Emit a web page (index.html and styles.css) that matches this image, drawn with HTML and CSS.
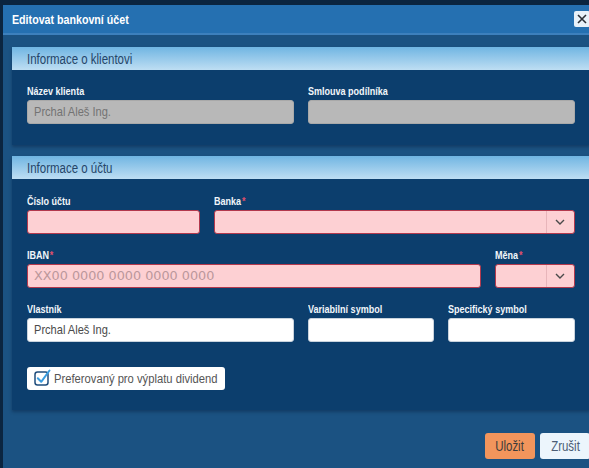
FILE: index.html
```html
<!DOCTYPE html>
<html lang="cs">
<head>
<meta charset="utf-8">
<link rel="stylesheet" href="styles.css">
</head>
<body>
<div class="modal">
  <div class="modal-header">
    <span class="modal-title"><span class="n">Editovat bankovní účet</span></span>
    <button class="close-btn" type="button" aria-label="Zavřít">
      <svg width="10" height="10" viewBox="0 0 10 10"><path d="M1 1 L9 9 M9 1 L1 9" stroke="#2b2f36" stroke-width="1.6" fill="none"/></svg>
    </button>
  </div>
  <div class="modal-body">
    <section class="panel">
      <div class="panel-head"><span class="n">Informace o klientovi</span></div>
      <div class="panel-body grid">
        <div class="field span6">
          <label class="lbl"><span class="n">Název klienta</span></label>
          <div class="input disabled"><span class="n">Prchal Aleš Ing.</span></div>
        </div>
        <div class="field span6">
          <label class="lbl"><span class="n">Smlouva podílníka</span></label>
          <div class="input disabled"></div>
        </div>
      </div>
    </section>

    <section class="panel second">
      <div class="panel-head"><span class="n">Informace o účtu</span></div>
      <div class="panel-body grid">
        <div class="field span4">
          <label class="lbl"><span class="n">Číslo účtu</span></label>
          <div class="input error"></div>
        </div>
        <div class="field span8">
          <label class="lbl"><span class="n">Banka<span class="req">*</span></span></label>
          <div class="input error select">
            <span class="sel-val"></span>
            <span class="sel-arrow"><svg width="10" height="6" viewBox="0 0 10 6"><path d="M1 1 L5 5 L9 1" stroke="#4a4a4a" stroke-width="1.4" fill="none"/></svg></span>
          </div>
        </div>

        <div class="field span10">
          <label class="lbl"><span class="n">IBAN<span class="req">*</span></span></label>
          <div class="input error"><span class="placeholder">XX00 0000 0000 0000 0000</span></div>
        </div>
        <div class="field span2">
          <label class="lbl"><span class="n">Měna<span class="req">*</span></span></label>
          <div class="input error select">
            <span class="sel-val"></span>
            <span class="sel-arrow"><svg width="10" height="6" viewBox="0 0 10 6"><path d="M1 1 L5 5 L9 1" stroke="#4a4a4a" stroke-width="1.4" fill="none"/></svg></span>
          </div>
        </div>

        <div class="field span6">
          <label class="lbl"><span class="n">Vlastník</span></label>
          <div class="input"><span class="n">Prchal Aleš Ing.</span></div>
        </div>
        <div class="field span3">
          <label class="lbl"><span class="n">Variabilní symbol</span></label>
          <div class="input"></div>
        </div>
        <div class="field span3">
          <label class="lbl"><span class="n">Specifický symbol</span></label>
          <div class="input"></div>
        </div>

        <div class="check-row span12">
          <div class="check">
            <svg width="17" height="17" viewBox="0 0 17 17"><rect x="1" y="3" width="13" height="13" rx="2.5" fill="#fff" stroke="#1f4d7c" stroke-width="1.5"/><path d="M3.8 9.2 L7.2 12.8 L15.5 1.5" stroke="#3a9de0" stroke-width="2" fill="none" stroke-linecap="round" stroke-linejoin="round"/></svg>
            <span class="n">Preferovaný pro výplatu dividend</span>
          </div>
        </div>
      </div>
    </section>

    <div class="footer">
      <button class="btn btn-save" type="button"><span class="n c">Uložit</span></button>
      <button class="btn btn-cancel" type="button"><span class="n c">Zrušit</span></button>
    </div>
  </div>
</div>
</body>
</html>
```

FILE: styles.css
```css
html, body {
  margin: 0;
  padding: 0;
  overflow: hidden;
  background: #0b2540;
  width: 589px;
  height: 468px;
}
body {
  padding: 5px 0 0 3px;
  box-sizing: border-box;
  font-family: "Liberation Sans", Arial, sans-serif;
}
/* narrow rendering of the UI font */
.n {
  display: inline-block;
  white-space: nowrap;
  transform: scaleX(0.82);
  transform-origin: left center;
}
.n.c {
  transform-origin: center center;
}
.modal {
  width: 596px;
  height: 480px;
  background: #1b5282;
  display: flex;
  flex-direction: column;
}
.modal-header {
  height: 28px;
  background: #2570b1;
  border-bottom: 2px solid #3d80bd;
  display: flex;
  align-items: center;
  justify-content: space-between;
  padding: 0 9px 0 9px;
}
.modal-title {
  color: #fff;
  font-weight: bold;
  font-size: 13px;
  padding-top: 1px;
}
.close-btn {
  width: 16px;
  height: 16px;
  padding: 0;
  border: none;
  background: #e8f1f9;
  display: flex;
  align-items: center;
  justify-content: center;
  border-radius: 2px;
}
.modal-body {
  padding: 12px 9px 0 9px;
  display: flex;
  flex-direction: column;
}
.panel {
  background: #0c3e6d;
  box-shadow: 0 2px 3px rgba(0, 20, 50, 0.35);
}
.panel.second {
  margin-top: 11px;
}
.panel-head {
  height: 23px;
  box-sizing: border-box;
  padding-left: 15px;
  display: flex;
  align-items: center;
  font-size: 14px;
  color: #254568;
  background: linear-gradient(to bottom, #70b5e2, #bedef3);
}
.panel-body {
  padding: 14px 15px 21px 15px;
}
.second .panel-body {
  padding-top: 15px;
  padding-bottom: 20px;
}
.grid {
  display: grid;
  grid-template-columns: repeat(12, 1fr);
  column-gap: 14px;
  row-gap: 14px;
}
.span2 { grid-column: span 2; }
.span3 { grid-column: span 3; }
.span4 { grid-column: span 4; }
.span6 { grid-column: span 6; }
.span8 { grid-column: span 8; }
.span10 { grid-column: span 10; }
.span12 { grid-column: span 12; }
.field {
  display: flex;
  flex-direction: column;
}
.lbl {
  color: #f2f6fa;
  font-weight: bold;
  font-size: 11px;
  line-height: 14px;
  height: 14px;
  margin-bottom: 2px;
}
.req {
  color: #e2506c;
  margin-left: 1px;
}
.input {
  height: 24px;
  box-sizing: border-box;
  border-radius: 3px;
  background: #fff;
  border: 1px solid #c9d3dd;
  color: #4a4a4a;
  font-size: 13.5px;
  line-height: 22px;
  padding: 0 6px;
  white-space: nowrap;
  overflow: hidden;
}
.input.disabled {
  background: #b8b8b8;
  border-color: #a9a9a9;
  color: #737373;
}
.input.error {
  background: #fdd0d3;
  border-color: #b3394d;
}
.placeholder {
  font-family: "DejaVu Sans", sans-serif;
  font-size: 12.8px;
  color: #bb979b;
}
.select {
  display: flex;
  padding: 0;
}
.sel-val {
  flex: 1;
}
.sel-arrow {
  width: 27px;
  border-left: 1px solid #e8b5ba;
  display: flex;
  align-items: center;
  justify-content: center;
}
.check-row {
  margin-top: 11px;
  display: flex;
}
.check {
  width: 198px;
  height: 23px;
  box-sizing: border-box;
  background: #fff;
  border-radius: 3px;
  display: flex;
  align-items: center;
  gap: 3px;
  padding: 0 0 0 7px;
  overflow: hidden;
  color: #555;
  font-size: 13.7px;
}
.check svg {
  flex: none;
  margin-top: -2px;
}
.footer {
  display: flex;
  justify-content: flex-end;
  gap: 5px;
  margin-top: 23px;
}
.btn {
  height: 26px;
  width: 50px;
  border: none;
  border-radius: 3px;
  font-family: inherit;
  font-size: 14px;
  padding: 0;
  overflow: hidden;
}
.btn-save {
  background: #f2955c;
  color: #3d3b3a;
}
.btn-cancel {
  background: #ecf5fc;
  color: #4b5c75;
}
```
